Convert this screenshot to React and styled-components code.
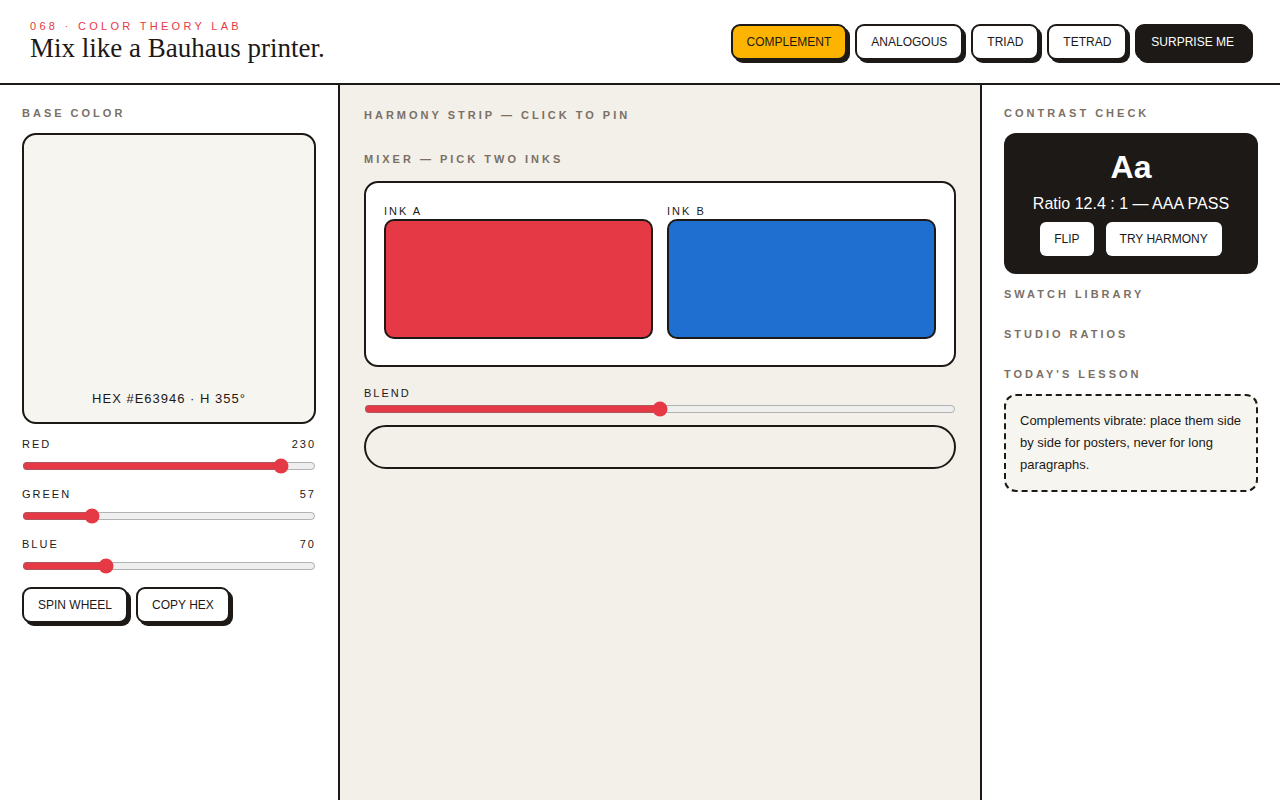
import React, { useState } from 'react'
import styled, { createGlobalStyle } from 'styled-components'

const INK = '#1c1917'
const RED = '#e63946'
const PAPER = '#f3efe9'
const MUTED = '#7a7066'

const GlobalStyle = createGlobalStyle`
  * { box-sizing: border-box; }
  html, body { margin: 0; padding: 0; }
  body {
    background: #fff;
    color: ${INK};
    font-family: 'Liberation Sans', Arial, sans-serif;
  }
`

const MODES = ['Complement', 'Analogous', 'Triad', 'Tetrad']

export default function App() {
  const [mode, setMode] = useState('Complement')
  const [rgb, setRgb] = useState({ red: 230, green: 57, blue: 70 })
  const [blend, setBlend] = useState(50)

  return (
    <Page>
      <GlobalStyle />
      <Header>
        <Brand>
          <Kicker>068 · Color Theory Lab</Kicker>
          <Title>Mix like a Bauhaus printer.</Title>
        </Brand>
        <ModeBar>
          {MODES.map(m => (
            <ChunkyButton key={m} $active={mode === m} onClick={() => setMode(m)}>
              {m}
            </ChunkyButton>
          ))}
          <ChunkyButton $dark>Surprise me</ChunkyButton>
        </ModeBar>
      </Header>

      <Columns>
        <LeftPane>
          <SectionLabel>Base color</SectionLabel>
          <BaseSwatch>
            <HexReadout>HEX #E63946 · H 355°</HexReadout>
          </BaseSwatch>
          {Object.keys(rgb).map(ch => (
            <SliderBlock key={ch}>
              <SliderHead>
                <span>{ch}</span>
                <span>{rgb[ch]}</span>
              </SliderHead>
              <Range
                type="range"
                min="0"
                max="255"
                value={rgb[ch]}
                onChange={e => setRgb({ ...rgb, [ch]: Number(e.target.value) })}
              />
            </SliderBlock>
          ))}
          <ButtonRow>
            <ChunkyButton>Spin wheel</ChunkyButton>
            <ChunkyButton>Copy hex</ChunkyButton>
          </ButtonRow>
        </LeftPane>

        <CenterPane>
          <SectionLabel>Harmony strip — click to pin</SectionLabel>
          <HarmonyStrip />
          <SectionLabel>Mixer — pick two inks</SectionLabel>
          <MixerCard>
            <InkSlot>
              <SmallLabel>Ink A</SmallLabel>
              <InkSwatch $color={RED} />
            </InkSlot>
            <InkSlot>
              <SmallLabel>Ink B</SmallLabel>
              <InkSwatch $color="#1f6fd1" />
            </InkSlot>
          </MixerCard>
          <BlendBlock>
            <SmallLabel>Blend</SmallLabel>
            <Range
              type="range"
              min="0"
              max="100"
              value={blend}
              onChange={e => setBlend(Number(e.target.value))}
            />
          </BlendBlock>
          <BlendResult />
        </CenterPane>

        <RightPane>
          <SectionLabel>Contrast check</SectionLabel>
          <ContrastCard>
            <Specimen>Aa</Specimen>
            <Ratio>Ratio 12.4 : 1 — AAA PASS</Ratio>
            <CardActions>
              <PlainButton>Flip</PlainButton>
              <PlainButton>Try harmony</PlainButton>
            </CardActions>
          </ContrastCard>
          <SectionLabel $gap={14}>Swatch library</SectionLabel>
          <SectionLabel $gap={27}>Studio ratios</SectionLabel>
          <SectionLabel $gap={27}>Today's lesson</SectionLabel>
          <Lesson>
            Complements vibrate: place them side by side for posters, never for long paragraphs.
          </Lesson>
        </RightPane>
      </Columns>
    </Page>
  )
}

const Page = styled.div`
  min-height: 100vh;
  display: flex;
  flex-direction: column;
`

const Header = styled.header`
  height: 85px;
  display: flex;
  align-items: center;
  justify-content: space-between;
  padding: 0 30px 2px 30px;
  border-bottom: 2px solid ${INK};
`

const Brand = styled.div`
  display: flex;
  flex-direction: column;
  padding-top: 1px;
`

const Kicker = styled.div`
  font-size: 11px;
  letter-spacing: 3.3px;
  text-transform: uppercase;
  color: ${RED};
  line-height: 13px;
`

const Title = styled.h1`
  margin: 0;
  font-family: 'Liberation Serif', 'Times New Roman', serif;
  font-weight: 400;
  font-size: 27px;
  line-height: 30px;
`

const ModeBar = styled.nav`
  display: flex;
  gap: 8px;
  margin-top: 2px;
`

const ChunkyButton = styled.button`
  height: 36px;
  padding: 0 14px;
  border: 2px solid ${INK};
  border-radius: 9px;
  box-shadow: 3px 3px 0 ${INK};
  background: ${p => (p.$active ? '#fcb400' : p.$dark ? INK : '#fff')};
  color: ${p => (p.$dark ? '#fff' : INK)};
  font-family: 'Liberation Sans', Arial, sans-serif;
  font-size: 12px;
  text-transform: uppercase;
  cursor: pointer;
`

const Columns = styled.main`
  flex: 1;
  display: grid;
  grid-template-columns: 340px 1fr 300px;
`

const LeftPane = styled.section`
  padding: 22px;
  border-right: 2px solid ${INK};
  display: flex;
  flex-direction: column;
`

const CenterPane = styled.section`
  background: ${PAPER};
  padding: 24px;
  display: flex;
  flex-direction: column;
`

const RightPane = styled.section`
  padding: 22px;
  border-left: 2px solid ${INK};
  display: flex;
  flex-direction: column;
`

const SectionLabel = styled.h2`
  margin: ${p => p.$gap || 0}px 0 0 0;
  font-size: 11px;
  line-height: 13px;
  font-weight: 700;
  letter-spacing: 3px;
  text-transform: uppercase;
  color: ${MUTED};
`

const SmallLabel = styled.div`
  font-size: 11px;
  line-height: 13px;
  letter-spacing: 2px;
  text-transform: uppercase;
  color: ${INK};
`

const BaseSwatch = styled.div`
  margin-top: 13px;
  height: 291px;
  border: 2px solid ${INK};
  border-radius: 14px;
  background: #f7f5f0;
  display: flex;
  align-items: flex-end;
  justify-content: center;
  padding-bottom: 16px;
`

const HexReadout = styled.div`
  font-size: 13px;
  letter-spacing: 1px;
`

const SliderBlock = styled.div`
  margin-top: 14px;
  display: flex;
  flex-direction: column;
  &:first-of-type {
    margin-top: 16px;
  }
`

const SliderHead = styled.div`
  display: flex;
  justify-content: space-between;
  font-size: 11px;
  line-height: 13px;
  letter-spacing: 2px;
  text-transform: uppercase;
`

const Range = styled.input`
  width: 100%;
  margin: 7px 0 0 0;
  accent-color: ${RED};
`

const ButtonRow = styled.div`
  margin-top: 13px;
  display: flex;
  gap: 8px;
`

const HarmonyStrip = styled.div`
  height: 31px;
`

const MixerCard = styled.div`
  margin-top: 15px;
  background: #fff;
  border: 2px solid ${INK};
  border-radius: 14px;
  padding: 22px 18px 26px;
  display: grid;
  grid-template-columns: 1fr 1fr;
  gap: 14px;
`

const InkSlot = styled.div`
  display: flex;
  flex-direction: column;
  gap: 1px;
`

const InkSwatch = styled.div`
  height: 120px;
  border: 2px solid ${INK};
  border-radius: 10px;
  background: ${p => p.$color};
`

const BlendBlock = styled.div`
  margin-top: 20px;
  display: flex;
  flex-direction: column;
  & > input {
    margin-top: 1px;
  }
`

const BlendResult = styled.div`
  margin-top: 8px;
  height: 44px;
  border: 2px solid ${INK};
  border-radius: 22px;
`

const ContrastCard = styled.div`
  margin-top: 13px;
  background: ${INK};
  color: #fff;
  border-radius: 12px;
  padding: 16px 16px 18px;
  display: flex;
  flex-direction: column;
  align-items: center;
`

const Specimen = styled.div`
  font-size: 32px;
  font-weight: 700;
  line-height: 36px;
`

const Ratio = styled.div`
  margin-top: 9px;
  font-size: 16px;
  line-height: 20px;
`

const CardActions = styled.div`
  margin-top: 8px;
  display: flex;
  gap: 12px;
`

const PlainButton = styled.button`
  height: 34px;
  padding: 0 14px;
  border: none;
  border-radius: 6px;
  background: #fff;
  color: ${INK};
  font-family: 'Liberation Sans', Arial, sans-serif;
  font-size: 12px;
  text-transform: uppercase;
`

const Lesson = styled.p`
  margin: 13px 0 0 0;
  padding: 14px;
  border: 2px dashed ${INK};
  border-radius: 12px;
  background: #f7f5f0;
  font-size: 13px;
  line-height: 22px;
`
